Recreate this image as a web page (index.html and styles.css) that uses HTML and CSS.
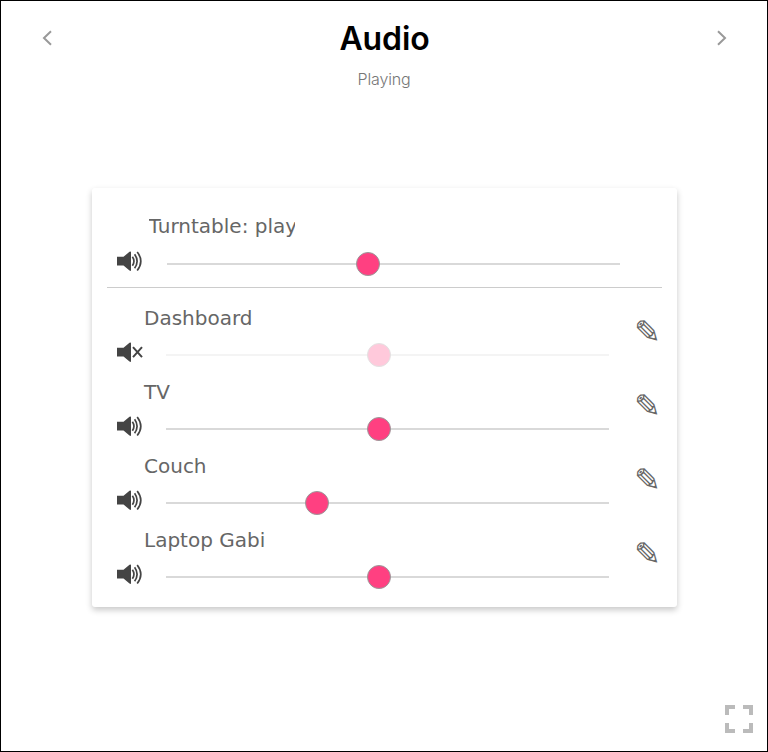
FILE: index.html
```html
<!DOCTYPE html>
<html lang="en">
<head>
<meta charset="utf-8">
<title>Audio</title>
<link rel="stylesheet" href="styles.css">
</head>
<body>
<svg class="defs" aria-hidden="true">
  <symbol id="speaker" viewBox="0 0 26 20">
    <path d="M0 5.8H6.5L12.5 .8Q14 0 14 1.2V19.2Q14 20.4 12.5 19.6L6.5 14.6H0Z" fill="#444"/>
    <g fill="none" stroke="#444" stroke-width="1.7"><path d="M15.4 5.8Q18.5 10.2 15.4 14.7M17.6 3.2Q22.6 10.2 17.6 17.2M20.2 .9Q27.4 10.2 20.2 19.5"/></g>
  </symbol>
  <symbol id="muted" viewBox="0 0 26 20">
    <path d="M0 5.8H6.5L12.5 .8Q14 0 14 1.2V19.2Q14 20.4 12.5 19.6L6.5 14.6H0Z" fill="#444"/>
    <path d="M16 5.2L25 15.2M25 5.2L16 15.2" fill="none" stroke="#444" stroke-width="2"/>
  </symbol>
</svg>
<main class="page">
  <header class="header">
    <svg class="arrow" viewBox="0 0 12 18"><path d="M10 2.3L3 9L10 15.7"/></svg>
    <div class="heading"><h1>Audio</h1><p>Playing</p></div>
    <svg class="arrow" viewBox="0 0 12 18"><path d="M3 2.3L10 9L3 15.7"/></svg>
  </header>
  <section class="card">
    <div class="row master">
      <div class="label"><span class="clip">Turntable: play</span></div>
      <svg class="speaker"><use href="#speaker"/></svg>
      <div class="slider"><span class="thumb" style="left:201px"></span></div>
    </div>
    <div class="row">
      <div class="label">Dashboard</div>
      <svg class="speaker"><use href="#muted"/></svg>
      <div class="slider off"><span class="thumb" style="left:213px"></span></div>
      <span class="edit">✎</span>
    </div>
    <div class="row">
      <div class="label">TV</div>
      <svg class="speaker"><use href="#speaker"/></svg>
      <div class="slider"><span class="thumb" style="left:213px"></span></div>
      <span class="edit">✎</span>
    </div>
    <div class="row">
      <div class="label">Couch</div>
      <svg class="speaker"><use href="#speaker"/></svg>
      <div class="slider"><span class="thumb" style="left:151px"></span></div>
      <span class="edit">✎</span>
    </div>
    <div class="row">
      <div class="label">Laptop Gabi</div>
      <svg class="speaker"><use href="#speaker"/></svg>
      <div class="slider"><span class="thumb" style="left:213px"></span></div>
      <span class="edit">✎</span>
    </div>
  </section>
  <svg class="fullscreen" viewBox="0 0 28 28"><path d="M2 10V2H10M18 2H26V10M26 18V26H18M10 26H2V18"/></svg>
</main>
</body>
</html>
```
FILE: styles.css
```css
* { box-sizing: border-box; }
body { margin: 0; background: #fff; }
.defs { position: absolute; width: 0; height: 0; }
.page {
  display: flex;
  flex-direction: column;
  width: 768px;
  height: 752px;
  border: 1px solid #000;
  overflow: hidden;
}
.header {
  display: flex;
  justify-content: space-between;
  height: 187px;
  padding: 0 40px;
  font-family: Inter, sans-serif;
}
.arrow { width: 12px; height: 18px; margin-top: 28px; fill: none; stroke: #999; stroke-width: 2; }
.heading { text-align: center; }
h1 { margin: 18px 0 0; padding-left: 1px; font-size: 32px; line-height: 40px; font-weight: 600; letter-spacing: -.1px; color: #000; }
.heading p { margin: 8px 0 0; font-size: 16px; line-height: 24px; font-weight: 300; letter-spacing: -.15px; color: #777; }
.card {
  width: 585px;
  height: 419px;
  flex: none;
  margin-left: 91px;
  padding: 0 15px;
  border-radius: 3px;
  background: #fff;
  box-shadow: 0 3px 6px rgba(0, 0, 0, .22);
}
.row {
  display: grid;
  grid-template-columns: 59px 443px 1fr;
  grid-template-rows: 36px 38px;
  height: 74px;
}
.master {
  grid-template-columns: 60px 453px 1fr;
  grid-template-rows: 36px 35px;
  height: 100px;
  padding-top: 20px;
  margin-bottom: 12px;
  border-bottom: 1px solid #ccc;
}
.label {
  grid-column: 1 / 3;
  padding-left: 37px;
  font: 20px/36px "DejaVu Sans", sans-serif;
  color: #666;
}
.master .label { padding-left: 41.6px; }
.clip { display: block; width: 146.4px; overflow: hidden; white-space: nowrap; }
.speaker { grid-column: 1; grid-row: 2; width: 26px; height: 20px; margin: 6px 0 0 10px; overflow: visible; }
.master .speaker { margin-top: 7px; }
.slider {
  grid-column: 2;
  grid-row: 2;
  position: relative;
  height: 2px;
  margin-top: 18px;
  background: #d9d9d9;
}
.master .slider { margin-top: 19px; }
.thumb {
  position: absolute;
  top: -11px;
  width: 24px;
  height: 24px;
  margin-left: -12px;
  border: 1px solid #999;
  border-radius: 50%;
  background: #ff4081;
}
.off { opacity: .28; }
.edit {
  grid-column: 3;
  grid-row: 1 / 3;
  padding: 12px 0 0 25px;
  font: 32px/40px "DejaVu Sans", sans-serif;
  color: #666;
}
.fullscreen {
  width: 28px;
  height: 28px;
  margin: auto 14px 18px auto;
  fill: none;
  stroke: #bbb;
  stroke-width: 4;
}
```
